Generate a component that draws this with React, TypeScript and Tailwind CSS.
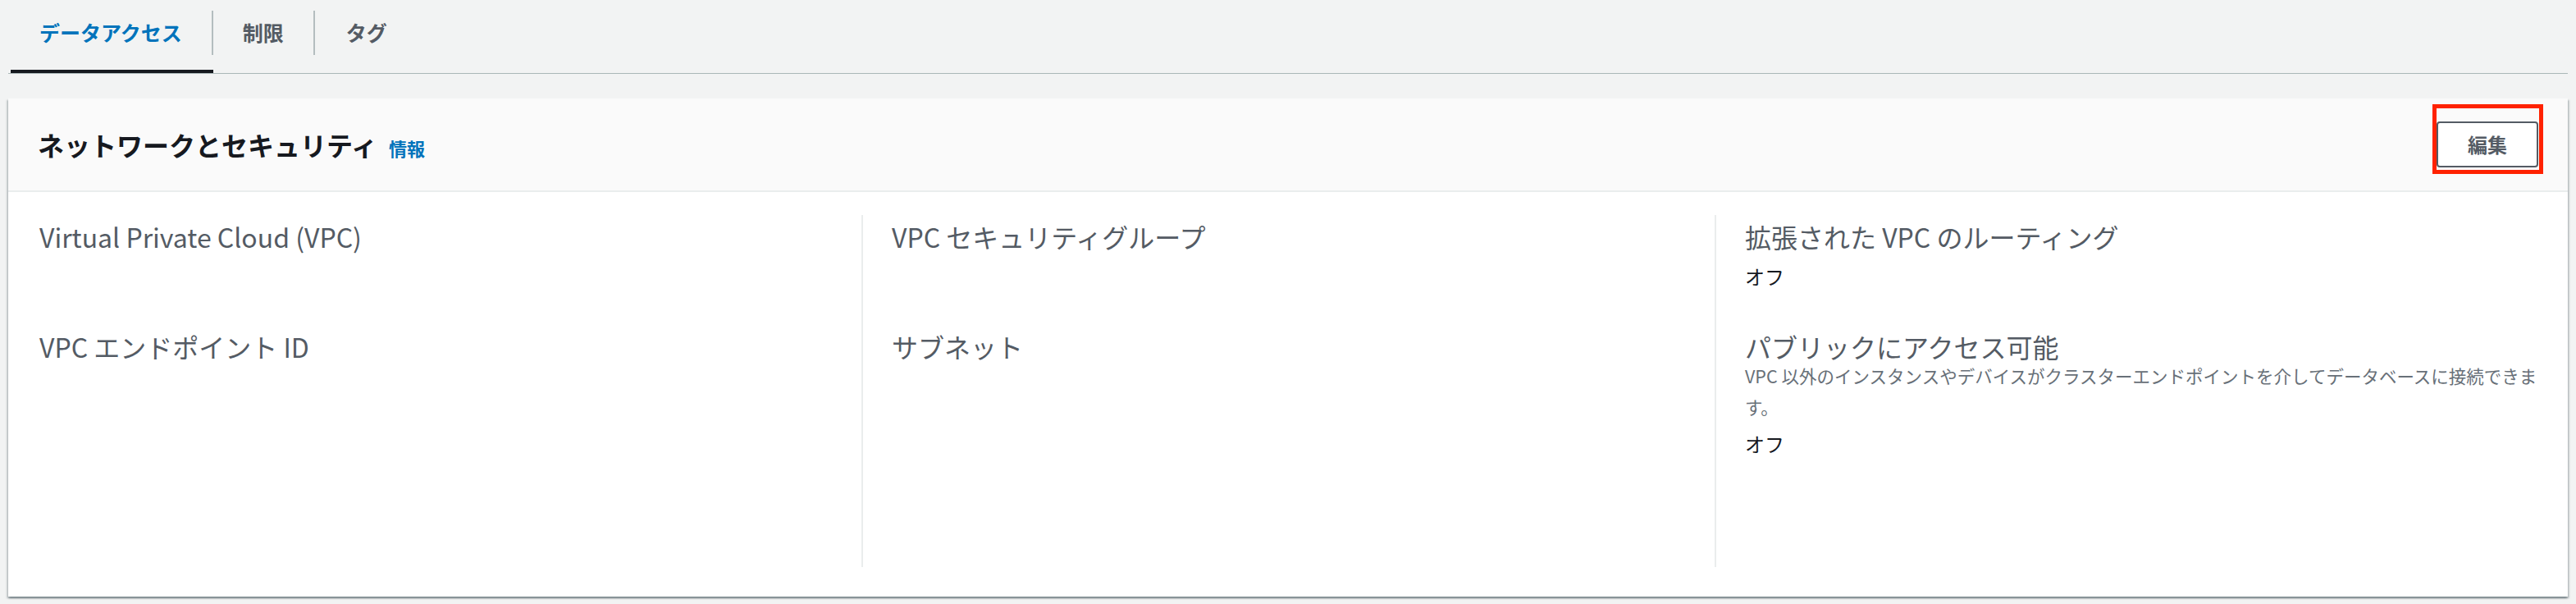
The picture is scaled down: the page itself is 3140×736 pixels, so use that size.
import React from "react";

const FONT = { fontFamily: '"Noto Sans CJK JP", "Noto Sans", sans-serif' };

function Tabs() {
  return (
    <div className="flex border-b border-[#aab7b8] pl-[3px] ml-[10px] mr-[10px]">
      <div className="relative h-[89px]">
        <div className="mt-[13px] h-[54px] flex items-center pl-[35px] pr-[36px] border-r-2 border-[#b4bdbf] text-[25px] font-bold text-[#0073bb]">
          データアクセス
        </div>
        <div className="absolute left-0 right-0 bottom-0 h-[4px] bg-[#16191f]" />
      </div>
      <div className="relative h-[89px]">
        <div className="mt-[13px] h-[54px] flex items-center pl-[36px] pr-[36px] border-r-2 border-[#b4bdbf] text-[25px] font-bold text-[#545b64]">
          制限
        </div>
      </div>
      <div className="relative h-[89px]">
        <div className="mt-[13px] h-[54px] flex items-center pl-[38px] pr-[36px] text-[25px] font-bold text-[#545b64]">
          タグ
        </div>
      </div>
    </div>
  );
}

function Label({ children }: { children: React.ReactNode }) {
  return <div className="text-[32px] leading-[40px] text-[#545b64]">{children}</div>;
}

function Value({ children }: { children?: React.ReactNode }) {
  return <div className="mt-[12px] h-[34px] text-[24px] leading-[34px] text-[#16191f]">{children}</div>;
}

export default function App() {
  return (
    <div style={FONT} className="w-[3140px] h-[736px] bg-[#f2f3f3] overflow-hidden">
      <Tabs />
      <div className="mt-[30px] mx-[10px] bg-white shadow-[0_2px_2px_0_rgba(0,28,36,0.35),2px_2px_2px_0_rgba(0,28,36,0.15),-2px_2px_2px_0_rgba(0,28,36,0.15)]">
        <div className="h-[114px] bg-[#fafafa] border-b-2 border-[#eaeded] flex items-center justify-between pl-[36px] pr-[36px]">
          <div className="flex items-baseline">
            <span className="text-[32px] font-bold text-[#16191f]">ネットワークとセキュリティ</span>
            <span className="ml-[14px] text-[22px] font-bold text-[#0073bb]">情報</span>
          </div>
          <div className="relative">
            <button className="w-[124px] h-[56px] rounded-[4px] border-2 border-[#545b64] bg-white text-[24px] font-bold text-[#545b64] flex items-center justify-center">
              編集
            </button>
            <div className="absolute left-[-5px] top-[-21px] w-[135px] h-[85px] border-[5px] border-[#ff2200] pointer-events-none" />
          </div>
        </div>
        <div className="grid grid-cols-3 pt-[28px] pb-[36px]">
          <div className="min-h-[429px] pl-[38px] pt-[6px]">
            <Label>Virtual Private Cloud (VPC)</Label>
            <Value />
            <div className="mt-[48px]">
              <Label>VPC エンドポイント ID</Label>
            </div>
          </div>
          <div className="min-h-[429px] border-l-2 border-[#eaeded] pl-[35px] pt-[6px]">
            <Label>VPC セキュリティグループ</Label>
            <Value />
            <div className="mt-[48px]">
              <Label>サブネット</Label>
            </div>
          </div>
          <div className="min-h-[429px] border-l-2 border-[#eaeded] pl-[35px] pr-[24px] pt-[6px]">
            <Label>拡張された VPC のルーティング</Label>
            <Value>オフ</Value>
            <div className="mt-[48px]">
              <Label>パブリックにアクセス可能</Label>
              <div className="-mt-[3px] text-[21.5px] leading-[38px] text-[#687078]">
                VPC 以外のインスタンスやデバイスがクラスターエンドポイントを介してデータベースに接続できます。
              </div>
              <div className="mt-[9px] h-[34px] text-[24px] leading-[34px] text-[#16191f]">オフ</div>
            </div>
          </div>
        </div>
      </div>
    </div>
  );
}
